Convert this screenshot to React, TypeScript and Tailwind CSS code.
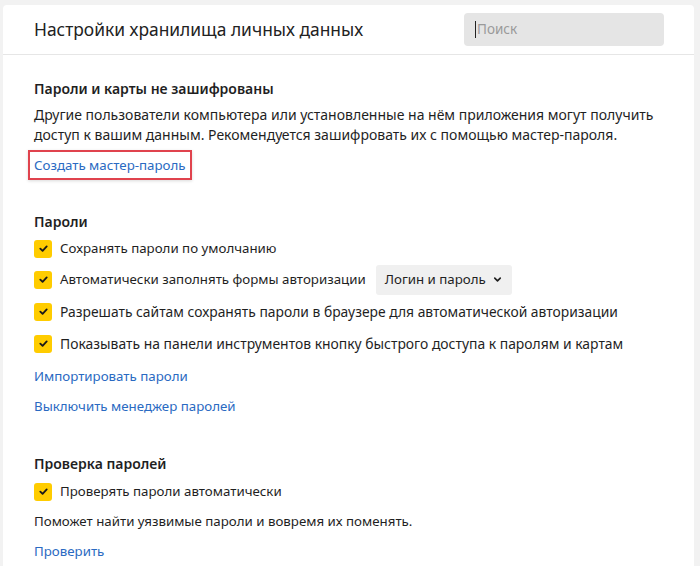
import { ChevronDown } from "lucide-react";

function Check() {
  return (
    <span className="flex h-[18px] w-[18px] shrink-0 items-center justify-center rounded-[3px] bg-[#ffcc00]">
      <svg viewBox="0 0 12 12" className="h-[11px] w-[11px]" fill="none" stroke="#1a1a1a" strokeWidth="2" strokeLinecap="round" strokeLinejoin="round">
        <path d="M2.5 6.2 5 8.5 9.5 3.8" />
      </svg>
    </span>
  );
}

function CheckRow({ label, children, h = "h-[32px]", className = "" }: { label: string; children?: React.ReactNode; h?: string; className?: string }) {
  return (
    <div className={`flex ${h} items-center gap-[8px]`}>
      <Check />
      <span className={className}>{label}</span>
      {children}
    </div>
  );
}

function Link({ children, className = "" }: { children: React.ReactNode; className?: string }) {
  return <a className={`text-[13.3px] text-[#2a6ac2] ${className}`}>{children}</a>;
}

export default function App() {
  return (
    <div
      className="h-[566px] w-[700px] overflow-hidden bg-[#f2f2f2] pl-[3px] pr-[6px] pt-[5px] text-[14px] text-[#1f1f1f]"
      style={{ fontFamily: '"Noto Sans", "Open Sans", sans-serif' }}
    >
      <div className="h-full rounded-t-[4px] bg-white">
        {/* header */}
        <div className="flex h-[50px] items-center justify-between border-b border-[#e6e6e6] pl-[31px] pr-[30px]">
          <h1 className="text-[17.4px] font-normal text-[#222]">Настройки хранилища личных данных</h1>
          <div className="flex h-[33px] w-[200px] items-center rounded-[4px] bg-[#e5e5e5] pl-[11px] text-[13.5px] text-[#9a9a9a]">
            <span className="mr-px h-[17px] w-px bg-[#222]" />
            Поиск
          </div>
        </div>

        <div className="pl-[31px]">
          {/* not encrypted */}
          <div className="pt-[23px]">
            <h2 className="text-[14px] font-semibold leading-[22px]">Пароли и карты не зашифрованы</h2>
            <p className="mt-[5px] leading-[20px]">
              Другие пользователи компьютера или установленные на нём приложения могут получить
              <br />
              доступ к вашим данным. Рекомендуется зашифровать их с помощью мастер-пароля.
            </p>
            <div className="mt-[5px] -ml-[6px] inline-block border-2 border-[#e0434d] px-[4px] py-[2px] shadow-[0_1px_3px_rgba(0,0,0,0.15)]">
              <Link>Создать мастер-пароль</Link>
            </div>
          </div>

          {/* passwords */}
          <div className="pt-[31px]">
            <h2 className="text-[14px] font-semibold leading-[22px]">Пароли</h2>
            <div className="mt-[1px]">
              <CheckRow label="Сохранять пароли по умолчанию" h="h-[30px]" className="text-[13.3px]" />
              <CheckRow label="Автоматически заполнять формы авторизации" h="h-[32px]" className="text-[13.3px]">
                <span className="ml-[2px] flex h-[30px] items-center gap-[6px] rounded-[3px] bg-[#f0f0f0] px-[9px] text-[13.3px]">
                  Логин и пароль
                  <ChevronDown className="h-[11px] w-[11px]" strokeWidth={3.5} />
                </span>
              </CheckRow>
              <CheckRow label="Разрешать сайтам сохранять пароли в браузере для автоматической авторизации" className="text-[13.85px]" />
              <CheckRow label="Показывать на панели инструментов кнопку быстрого доступа к паролям и картам" className="text-[13.9px]" />
            </div>
            <div className="mt-[2px] flex flex-col">
              <div className="flex h-[30px] items-center"><Link>Импортировать пароли</Link></div>
              <div className="flex h-[30px] items-center"><Link>Выключить менеджер паролей</Link></div>
            </div>
          </div>

          {/* check */}
          <div className="pt-[31px]">
            <h2 className="text-[14px] font-semibold leading-[22px]">Проверка паролей</h2>
            <div className="mt-[2px]">
              <CheckRow label="Проверять пароли автоматически" h="h-[30px]" className="text-[13.3px]" />
            </div>
            <p className="flex h-[31px] items-center text-[13.3px]">Поможет найти уязвимые пароли и вовремя их поменять.</p>
            <div className="flex h-[28px] items-center"><Link>Проверить</Link></div>
          </div>
        </div>
      </div>
    </div>
  );
}
